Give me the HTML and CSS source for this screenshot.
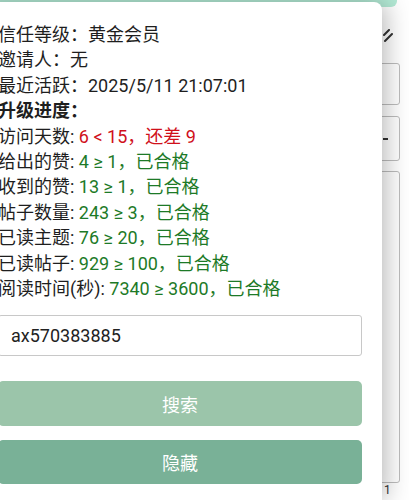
FILE: index.html
```html
<!DOCTYPE html>
<html lang="zh">
<head>
<meta charset="utf-8">
<link rel="stylesheet" href="styles.css">
</head>
<body>
<div class="page">
  <div class="topbar"></div>
  <div class="bg-form">
    <div class="bg-icon">
      <svg width="10" height="14" viewBox="0 0 10 14"><path d="M1 6 L6 1 M2 12 L9 5" stroke="#333" stroke-width="2" fill="none" stroke-linecap="round"/></svg>
    </div>
    <div class="bg-box bg-box1"></div>
    <div class="bg-box bg-box2"><span class="bg-dash"></span></div>
    <div class="bg-box bg-box3"></div>
    <div class="bg-foot">1</div>
  </div>
</div>
<div class="panel">
  <div class="info">
    <div class="line">信任等级：黄金会员</div>
    <div class="line">邀请人：无</div>
    <div class="line">最近活跃：2025/5/11 21:07:01</div>
    <div class="line bold">升级进度：</div>
    <div class="line">访问天数: <span class="bad">6 &lt; 15，还差 9</span></div>
    <div class="line">给出的赞: <span class="ok">4 ≥ 1，已合格</span></div>
    <div class="line">收到的赞: <span class="ok">13 ≥ 1，已合格</span></div>
    <div class="line">帖子数量: <span class="ok">243 ≥ 3，已合格</span></div>
    <div class="line">已读主题: <span class="ok">76 ≥ 20，已合格</span></div>
    <div class="line">已读帖子: <span class="ok">929 ≥ 100，已合格</span></div>
    <div class="line">阅读时间(秒): <span class="ok">7340 ≥ 3600，已合格</span></div>
  </div>
  <input class="field" type="text" value="ax570383885">
  <button class="btn btn-search">搜索</button>
  <button class="btn btn-hide">隐藏</button>
</div>
</body>
</html>
```

FILE: styles.css
```css
html, body {
  margin: 0;
  padding: 0;
  width: 409px;
  height: 500px;
  overflow: hidden;
  background: #ffffff;
  font-family: Roboto, "Noto Sans CJK SC", sans-serif;
}

.page {
  width: 409px;
  height: 500px;
  display: flex;
  flex-direction: column;
  background: #ffffff;
  overflow: hidden;
}

.topbar {
  height: 7px;
  width: 397px;
  flex: none;
  background: #b3ead5;
  border-radius: 0 0 6px 0;
}

.bg-form {
  display: flex;
  flex-direction: column;
  align-items: flex-end;
  padding-right: 9px;
}

.bg-icon {
  margin-top: 21px;
  margin-right: 7px;
  height: 14px;
}

.bg-box {
  width: 200px;
  border: 1px solid #bdbdbd;
  border-radius: 3px;
  background: #fff;
  box-sizing: border-box;
  flex: none;
}

.bg-box1 {
  margin-top: 21px;
  height: 42px;
}

.bg-box2 {
  margin-top: 11px;
  height: 45px;
  display: flex;
  align-items: center;
  justify-content: flex-end;
  padding-right: 11px;
}

.bg-dash {
  width: 5px;
  height: 2px;
  background: #333;
}

.bg-box3 {
  margin-top: 10px;
  height: 312px;
}

.bg-foot {
  align-self: flex-start;
  margin-left: 384px;
  margin-top: 1px;
  font-size: 12px;
  line-height: 12px;
  color: #333;
}

.panel {
  position: absolute;
  top: 2px;
  left: -22px;
  width: 364px;
  height: 458px;
  padding: 20px;
  background: #ffffff;
  border-radius: 8px 8px 0 0;
  box-shadow: 3px 0 26px rgba(0, 0, 0, 0.3);
  display: flex;
  flex-direction: column;
}

.info {
  font-size: 18px;
  line-height: 25.4px;
  color: #1e1e1e;
}

.bold {
  font-weight: 700;
}

.bad {
  color: #d0101b;
}

.ok {
  color: #1d7a27;
}

.field {
  margin-top: 14px;
  height: 41px;
  flex: none;
  box-sizing: border-box;
  border: 1px solid #c8c8c8;
  border-radius: 3px;
  padding: 0 12px;
  font-family: Roboto, "Noto Sans CJK SC", sans-serif;
  font-size: 18px;
  color: #222;
  outline: none;
}

.btn {
  height: 45px;
  flex: none;
  border: none;
  border-radius: 5px;
  color: #ffffff;
  font-family: Roboto, "Noto Sans CJK SC", sans-serif;
  font-size: 18px;
}

.btn-search {
  margin-top: 25px;
  background: #9bc5aa;
}

.btn-hide {
  margin-top: 14px;
  height: 44px;
  background: #79b197;
}
```
